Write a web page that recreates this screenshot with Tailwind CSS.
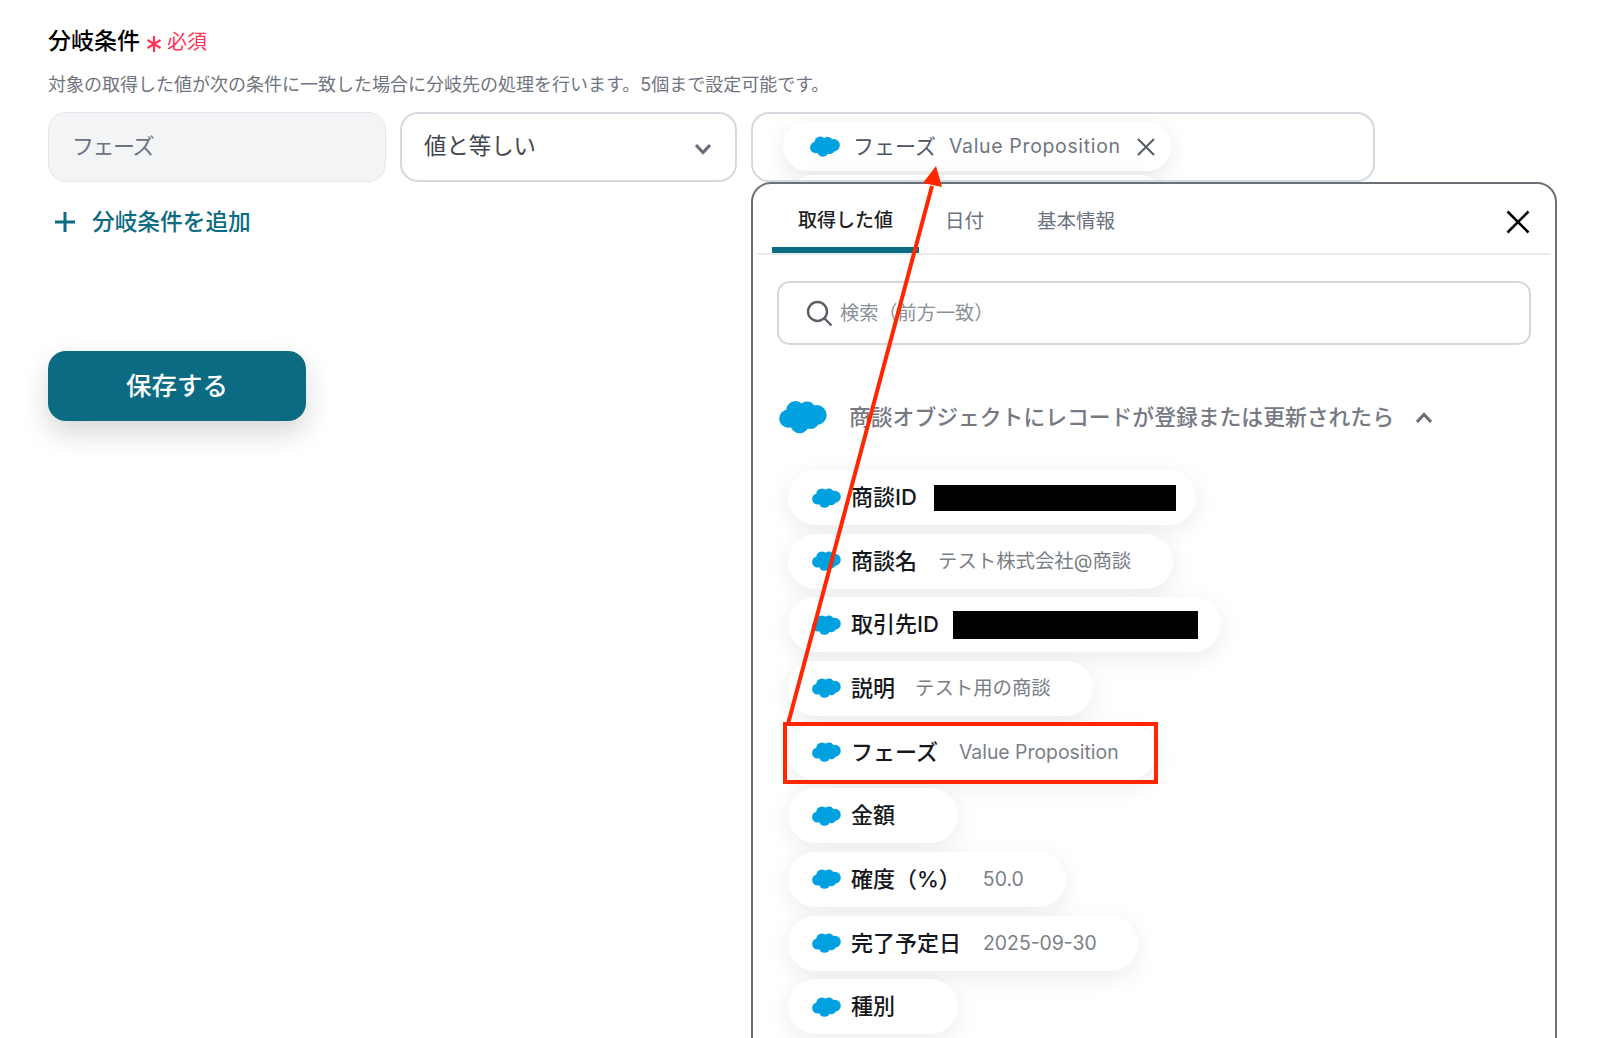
<!DOCTYPE html>
<html lang="ja">
<head>
<meta charset="utf-8">
<script src="https://cdn.jsdelivr.net/npm/@tailwindcss/browser@4"></script>
</head>
<body class="bg-white">
<svg class="hidden"><defs><symbol id="c" viewBox="0 0 29 20"><g fill="#00a1e0"><circle cx="10" cy="6.2" r="5.8"/><circle cx="17" cy="5.6" r="5"/><circle cx="22.8" cy="8.8" r="6"/><circle cx="5.6" cy="11" r="5.5"/><circle cx="12.5" cy="14.2" r="5.6"/><circle cx="19" cy="12" r="5.3"/></g></symbol></defs></svg>
<div class="relative w-[1600px] h-[1038px] overflow-hidden font-['Inter','Noto_Sans_CJK_JP',sans-serif] pl-[48px] pt-[24px]">
  <div class="flex items-center h-[34px]">
    <span class="text-[23px] leading-[34px] font-medium text-black">分岐条件</span>
    <svg class="w-[16px] h-[18px] ml-[6px] mt-[5px]" viewBox="0 0 16 18" fill="none" stroke="#ff3358" stroke-width="2.2"><path d="M8 1v16M1.5 5l13 8M14.5 5l-13 8"/></svg>
    <span class="ml-[5px] mt-[2px] text-[20px] leading-[34px] text-[#ff3358]">必須</span>
  </div>
  <p class="mt-[11px] text-[18px] leading-[32px] text-[#6f757e] whitespace-nowrap">対象の取得した値が次の条件に一致した場合に分岐先の処理を行います。5個まで設定可能です。</p>
  <div class="flex gap-[14px] mt-[11px]">
    <div class="w-[338px] h-[70px] rounded-[18px] border border-[#e5e7eb] bg-[#f3f4f5] flex items-center pl-[23px] pb-[2px] text-[22px] tracking-[-1.5px] text-[#6b7280]">フェーズ</div>
    <div class="w-[337px] h-[70px] rounded-[18px] border-2 border-[#d5d9e0] flex items-center justify-between pl-[22px] pr-[23px] text-[22.4px] text-[#3f4650]">
      <span class="pb-[2px]">値と等しい</span>
      <svg class="w-[18px] h-[12px] mt-[3px]" viewBox="0 0 18 12" fill="none" stroke="#666c75" stroke-width="3"><path d="M2 2l7 7.5L16 2"/></svg>
    </div>
    <div class="w-[624px] h-[70px] rounded-[18px] border-2 border-[#d5d9e0] pl-[30px] pt-[8px] overflow-hidden">
      <div class="w-[388px] h-[49px] rounded-full bg-white shadow-[0_6px_22px_rgba(0,0,0,0.09)] flex items-center pl-[27px]">
        <svg class="w-[30px] h-[21px]"><use href="#c"/></svg>
        <span class="ml-[13px] text-[21px] text-[#4b5563]">フェーズ</span>
        <span class="ml-[13px] text-[19.5px] tracking-[0.65px] text-[#71767e] whitespace-nowrap">Value Proposition</span>
        <svg class="ml-[15px] w-[20px] h-[20px]" viewBox="0 0 20 20" fill="none" stroke="#555b64" stroke-width="2"><path d="M2 2l16 16M18 2L2 18"/></svg>
      </div>
      <div class="w-[376px] h-[49px] ml-[6px] mt-[4px] rounded-full bg-white shadow-[0_6px_22px_rgba(0,0,0,0.09)]"></div>
    </div>
  </div>
  <div class="flex items-center mt-[24px] h-[32px] text-[#0a6b83]">
    <svg class="ml-[6px] w-[22px] h-[22px]" viewBox="0 0 22 22" fill="none" stroke="#0a6b83" stroke-width="3"><path d="M11 1v20M1 11h20"/></svg>
    <span class="ml-[16px] text-[22.7px] font-medium">分岐条件を追加</span>
  </div>
  <button class="mt-[113px] w-[258px] h-[70px] rounded-[18px] bg-[#0a6b83] text-white text-[25.5px] font-medium shadow-[0_12px_28px_rgba(0,0,0,0.16)] block">保存する</button>

  <div class="absolute left-[751px] top-[182px] w-[806px] h-[900px] rounded-[20px] border-2 border-[#6c7178] bg-white">
    <div class="flex items-start justify-between mx-[4px] h-[71px] border-b-2 border-[#e8eaec]">
      <div class="flex h-[69px] pl-[15px]">
        <div class="px-[26px] h-full flex items-center text-[19px] font-medium text-[#1c1f24] border-b-[6px] border-[#0a6b83] rounded-t-[6px] pt-[12px]">取得した値</div>
        <div class="px-[26px] h-full flex items-center text-[19.5px] text-[#6b7280] pt-[6px]">日付</div>
        <div class="pl-[27px] h-full flex items-center text-[19.5px] text-[#6b7280] pt-[6px]">基本情報</div>
      </div>
      <svg class="mt-[26px] mr-[21px] w-[24px] h-[24px]" viewBox="0 0 24 24" fill="none" stroke="#000" stroke-width="2.6"><path d="M1.5 1.5l21 21M22.5 1.5l-21 21"/></svg>
    </div>
    <div class="mx-[24px] mt-[26px] h-[64px] rounded-[13px] border-2 border-[#d4d7db] flex items-center pl-[27px]">
      <svg class="w-[27px] h-[27px]" viewBox="0 0 27 27" fill="none" stroke="#5a6068" stroke-width="2.4"><circle cx="11.5" cy="11.5" r="9.5"/><path d="M18.5 18.5l7 7"/></svg>
      <span class="ml-[7px] pt-[1px] text-[19.2px] text-[#8a9098]">検索（前方一致）</span>
    </div>
    <div class="flex items-center ml-[26px] mt-[54px] h-[36px]">
      <svg class="w-[48px] h-[34px]"><use href="#c"/></svg>
      <span class="ml-[22px] text-[21.8px] font-medium text-[#757a82] whitespace-nowrap">商談オブジェクトにレコードが登録または更新されたら</span>
      <svg class="ml-[21px] mt-[2px] w-[18px] h-[12px]" viewBox="0 0 18 12" fill="none" stroke="#666c75" stroke-width="3"><path d="M2 10l7-7.5L16 10"/></svg>
    </div>
    <div class="flex flex-col items-start gap-[8.67px] ml-[35px] mt-[35px]">
      <div class="h-[55px] w-[408px] rounded-full bg-white shadow-[0_6px_24px_rgba(0,0,0,0.08)] flex items-center pl-[24px] whitespace-nowrap"><svg class="w-[29px] h-[20px] shrink-0"><use href="#c"/></svg><span class="ml-[10px] text-[22px] font-medium text-[#16181c]">商談ID</span><span class="ml-[17px] w-[242px] h-[26px] bg-black"></span></div>
      <div class="h-[55px] w-[385px] rounded-full bg-white shadow-[0_6px_24px_rgba(0,0,0,0.08)] flex items-center pl-[24px] whitespace-nowrap"><svg class="w-[29px] h-[20px] shrink-0"><use href="#c"/></svg><span class="ml-[10px] text-[22px] font-medium text-[#16181c]">商談名</span><span class="ml-[21px] text-[19.4px] text-[#7a7f86]">テスト株式会社@商談</span></div>
      <div class="h-[55px] w-[433px] rounded-full bg-white shadow-[0_6px_24px_rgba(0,0,0,0.08)] flex items-center pl-[24px] whitespace-nowrap"><svg class="w-[29px] h-[20px] shrink-0"><use href="#c"/></svg><span class="ml-[10px] text-[22px] font-medium text-[#16181c]">取引先ID</span><span class="ml-[14px] w-[245px] h-[28px] bg-black"></span></div>
      <div class="h-[55px] w-[305px] rounded-full bg-white shadow-[0_6px_24px_rgba(0,0,0,0.08)] flex items-center pl-[24px] whitespace-nowrap"><svg class="w-[29px] h-[20px] shrink-0"><use href="#c"/></svg><span class="ml-[10px] text-[22px] font-medium text-[#16181c]">説明</span><span class="ml-[20px] text-[19.4px] text-[#7a7f86]">テスト用の商談</span></div>
      <div class="h-[55px] w-[368px] rounded-full bg-white shadow-[0_6px_24px_rgba(0,0,0,0.08)] flex items-center pl-[24px] whitespace-nowrap"><svg class="w-[29px] h-[20px] shrink-0"><use href="#c"/></svg><span class="ml-[10px] text-[22px] font-medium text-[#16181c]">フェーズ</span><span class="ml-[21px] text-[19.4px] text-[#7a7f86]">Value Proposition</span></div>
      <div class="h-[55px] w-[170px] rounded-full bg-white shadow-[0_6px_24px_rgba(0,0,0,0.08)] flex items-center pl-[24px] whitespace-nowrap"><svg class="w-[29px] h-[20px] shrink-0"><use href="#c"/></svg><span class="ml-[10px] text-[22px] font-medium text-[#16181c]">金額</span></div>
      <div class="h-[55px] w-[278px] rounded-full bg-white shadow-[0_6px_24px_rgba(0,0,0,0.08)] flex items-center pl-[24px] whitespace-nowrap"><svg class="w-[29px] h-[20px] shrink-0"><use href="#c"/></svg><span class="ml-[10px] text-[22px] font-medium text-[#16181c]">確度（%）</span><span class="ml-[22px] text-[19.4px] text-[#7a7f86]">50.0</span></div>
      <div class="h-[55px] w-[350px] rounded-full bg-white shadow-[0_6px_24px_rgba(0,0,0,0.08)] flex items-center pl-[24px] whitespace-nowrap"><svg class="w-[29px] h-[20px] shrink-0"><use href="#c"/></svg><span class="ml-[10px] text-[22px] font-medium text-[#16181c]">完了予定日</span><span class="ml-[22px] text-[19.4px] text-[#7a7f86]">2025-09-30</span></div>
      <div class="h-[55px] w-[170px] rounded-full bg-white shadow-[0_6px_24px_rgba(0,0,0,0.08)] flex items-center pl-[24px] whitespace-nowrap"><svg class="w-[29px] h-[20px] shrink-0"><use href="#c"/></svg><span class="ml-[10px] text-[22px] font-medium text-[#16181c]">種別</span></div>
    </div>
  </div>

  <div class="absolute left-[783px] top-[722px] w-[375px] h-[62px] border-[4px] border-[#ff2600]"></div>
  <svg class="absolute left-0 top-0 pointer-events-none" width="1600" height="1038" viewBox="0 0 1600 1038">
    <path d="M788 724L932 186" stroke="#ff2600" stroke-width="4" fill="none"/>
    <path d="M936 166L923 183L942 187Z" fill="#ff2600"/>
  </svg>
</div>
</body>
</html>
